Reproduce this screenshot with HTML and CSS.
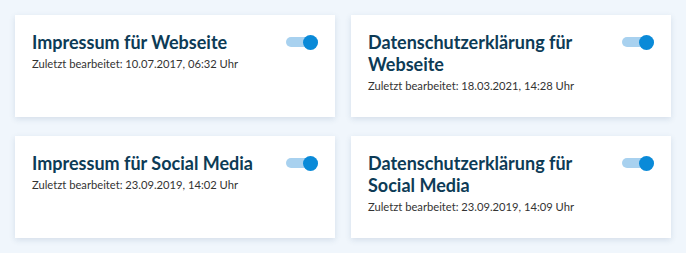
FILE: index.html
```html
<!DOCTYPE html>
<html lang="de">
<head>
    <meta charset="UTF-8">
    <title>Rechtstexte</title>
    <link rel="stylesheet" href="styles.css">
</head>
<body>
    <div class="doc-grid">
        <div class="doc-card">
            <div class="doc-info">
                <div class="doc-title">Impressum für Webseite</div>
                <div class="doc-date">Zuletzt bearbeitet: 10.07.2017, 06:32 Uhr</div>
            </div>
            <span class="toggle on"><span class="knob"></span></span>
        </div>

        <div class="doc-card">
            <div class="doc-info">
                <div class="doc-title">Datenschutzerklärung für Webseite</div>
                <div class="doc-date">Zuletzt bearbeitet: 18.03.2021, 14:28 Uhr</div>
            </div>
            <span class="toggle on"><span class="knob"></span></span>
        </div>

        <div class="doc-card">
            <div class="doc-info">
                <div class="doc-title">Impressum für Social Media</div>
                <div class="doc-date">Zuletzt bearbeitet: 23.09.2019, 14:02 Uhr</div>
            </div>
            <span class="toggle on"><span class="knob"></span></span>
        </div>

        <div class="doc-card">
            <div class="doc-info">
                <div class="doc-title">Datenschutzerklärung für Social Media</div>
                <div class="doc-date">Zuletzt bearbeitet: 23.09.2019, 14:09 Uhr</div>
            </div>
            <span class="toggle on"><span class="knob"></span></span>
        </div>
    </div>
</body>
</html>
```

FILE: styles.css
```css
* { margin: 0; padding: 0; box-sizing: border-box; }
body {
    background: #f0f6fc;
    font-family: Lato, "Open Sans", sans-serif;
    padding: 15px;
}
.doc-grid {
    display: grid;
    grid-template-columns: 320px 320px;
    column-gap: 16px;
    row-gap: 19px;
}
.doc-card {
    background: #fff;
    box-shadow: 0 2px 6px rgba(40, 80, 120, 0.14);
    padding: 16px 17px 23px 17px;
    display: flex;
    align-items: flex-start;
    gap: 20px;
}
.doc-info {
    flex: 1;
}
.doc-title {
    font-size: 18px;
    font-weight: 700;
    line-height: 22px;
    color: #0d3b56;
}
.doc-date {
    font-size: 11.2px;
    line-height: 16px;
    color: #333;
    margin-top: 3px;
}
.toggle {
    position: relative;
    display: block;
    width: 32px;
    height: 10px;
    margin-top: 6px;
    border-radius: 5px;
    background: #a8d1ef;
}
.toggle .knob {
    position: absolute;
    right: 0;
    top: -2.5px;
    width: 15px;
    height: 15px;
    border-radius: 50%;
    background: #0a8ad8;
}
```
